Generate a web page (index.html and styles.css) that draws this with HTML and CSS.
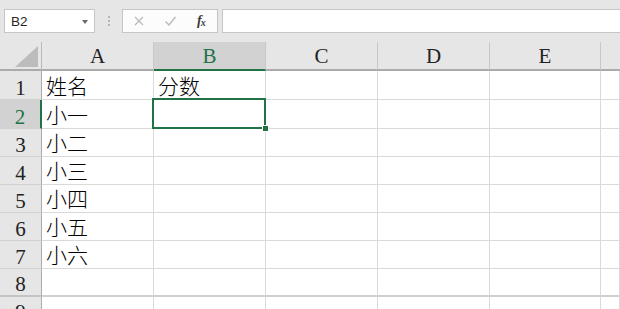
FILE: index.html
```html
<!DOCTYPE html>
<html lang="zh">
<head>
<meta charset="utf-8">
<title>Sheet</title>
<link rel="stylesheet" href="styles.css">
</head>
<body>
<div class="toolbar">
  <div class="namebox"><span class="nb-text">B2</span><span class="nb-arrow"></span></div>
  <div class="dots"><span></span><span></span><span></span></div>
  <div class="fbtns">
    <svg class="ico" width="12" height="12" viewBox="0 0 12 12"><path d="M2 2 L10 10 M10 2 L2 10" stroke="#b9b9b9" stroke-width="1.2" fill="none"/></svg>
    <svg class="ico" width="13" height="12" viewBox="0 0 13 12"><path d="M1.5 6.5 L5 10 L11.5 2" stroke="#b9b9b9" stroke-width="1.4" fill="none"/></svg>
    <span class="fx">f<span class="fx-x">x</span></span>
  </div>
  <div class="finput"></div>
</div>
<div class="sheet">
  <div class="corner"><svg width="24" height="22" viewBox="0 0 24 22"><polygon points="23,0 23,21 0,21" fill="#bcbcbc"/></svg></div>
  <div class="h">A</div>
  <div class="h sel">B</div>
  <div class="h">C</div>
  <div class="h">D</div>
  <div class="h">E</div>
  <div class="h last"></div>

  <div class="rh">1</div><div class="c">姓名</div><div class="c">分数</div><div class="c"></div><div class="c"></div><div class="c"></div><div class="c"></div>
  <div class="rh sel">2</div><div class="c">小一</div><div class="c active"><span class="handle"></span></div><div class="c"></div><div class="c"></div><div class="c"></div><div class="c"></div>
  <div class="rh">3</div><div class="c">小二</div><div class="c"></div><div class="c"></div><div class="c"></div><div class="c"></div><div class="c"></div>
  <div class="rh">4</div><div class="c">小三</div><div class="c"></div><div class="c"></div><div class="c"></div><div class="c"></div><div class="c"></div>
  <div class="rh">5</div><div class="c">小四</div><div class="c"></div><div class="c"></div><div class="c"></div><div class="c"></div><div class="c"></div>
  <div class="rh">6</div><div class="c">小五</div><div class="c"></div><div class="c"></div><div class="c"></div><div class="c"></div><div class="c"></div>
  <div class="rh">7</div><div class="c">小六</div><div class="c"></div><div class="c"></div><div class="c"></div><div class="c"></div><div class="c"></div>
  <div class="rh r8">8</div><div class="c r8"></div><div class="c r8"></div><div class="c r8"></div><div class="c r8"></div><div class="c r8"></div><div class="c r8"></div>
  <div class="rh r9">9</div><div class="c"></div><div class="c"></div><div class="c"></div><div class="c"></div><div class="c"></div><div class="c"></div>
</div>
</body>
</html>
```

FILE: styles.css
```css
html, body {
  margin: 0;
  padding: 0;
}
body {
  width: 620px;
  height: 309px;
  overflow: hidden;
  background: #e6e6e6;
  font-family: "Liberation Serif", "Noto Sans CJK SC", serif;
}
.toolbar {
  display: flex;
  align-items: center;
  height: 42px;
  padding: 9px 0 9px 4px;
  box-sizing: border-box;
}
.namebox {
  width: 91px;
  height: 24px;
  box-sizing: border-box;
  background: #fff;
  border: 1px solid #c6c6c6;
  display: flex;
  align-items: center;
  justify-content: space-between;
  padding: 0 6px 0 6px;
}
.nb-text {
  font-family: "Liberation Sans", "Noto Sans", sans-serif;
  font-size: 13.5px;
  color: #262626;
}
.nb-arrow {
  width: 0;
  height: 0;
  border-left: 3.5px solid transparent;
  border-right: 3.5px solid transparent;
  border-top: 4px solid #6a6a6a;
  margin-top: 1px;
}
.dots {
  width: 27px;
  height: 24px;
  display: flex;
  flex-direction: column;
  align-items: center;
  justify-content: center;
  gap: 2px;
}
.dots span {
  width: 2px;
  height: 2px;
  background: #b4b4b4;
}
.fbtns {
  width: 96px;
  height: 24px;
  box-sizing: border-box;
  background: #fcfcfc;
  border: 1px solid #c6c6c6;
  display: flex;
  align-items: center;
  padding-left: 10px;
  gap: 19px;
}
.fx {
  font-family: "Liberation Serif", serif;
  font-style: italic;
  font-weight: bold;
  font-size: 14px;
  color: #3c3c3c;
  margin-left: 1px;
  letter-spacing: -1px;
}
.fx-x {
  font-size: 10px;
  position: relative;
  top: 1px;
}
.finput {
  flex: 1;
  height: 24px;
  box-sizing: border-box;
  background: #fff;
  border: 1px solid #c6c6c6;
  border-right: none;
  margin-left: 4px;
}
.sheet {
  display: grid;
  grid-template-columns: 42px 112px 112px 112px 112px 111px 1fr;
  grid-template-rows: 29px 29px 29px 28px 28px 28px 28px 28px 28px 1fr;
  height: 267px;
  background: #fff;
}
.sheet > div {
  box-sizing: border-box;
}
.corner {
  background: #e6e6e6;
  border-right: 1px solid #bababa;
  border-bottom: 2px solid #ababab;
  display: flex;
  align-items: flex-end;
  justify-content: flex-end;
  padding: 0 2px 1px 0;
}
.corner svg {
  display: block;
}
.h {
  background: #e6e6e6;
  border-right: 1px solid #c8c8c8;
  border-bottom: 2px solid #ababab;
  display: flex;
  align-items: flex-end;
  justify-content: center;
  font-size: 21px;
  line-height: 1;
  color: #222;
  padding-bottom: 2px;
}
.h.sel {
  background: #d2d2d2;
  color: #217346;
  border-bottom-color: #217346;
}
.h.last {
  border-right: none;
}
.rh {
  background: #e6e6e6;
  border-right: 1px solid #ababab;
  border-bottom: 1px solid #d0d0d0;
  display: flex;
  align-items: flex-end;
  justify-content: center;
  font-size: 21px;
  line-height: 1;
  color: #222;
  padding-bottom: 0px;
}
.rh.sel {
  background: #d2d2d2;
  color: #217346;
  border-right: 2px solid #217346;
}
.rh.r9 {
  align-items: flex-start;
  padding-top: 5px;
}
.c {
  border-right: 1px solid #dadada;
  border-bottom: 1px solid #dadada;
  display: flex;
  align-items: flex-end;
  padding: 0 0 3px 4px;
  font-family: "Noto Sans CJK SC", sans-serif;
  font-weight: 300;
  font-size: 21px;
  line-height: 1;
  color: #000;
}
.r8 {
  border-bottom: 2px solid #d0d0d0;
}
.rh.r8 {
  border-bottom: 2px solid #c4c4c4;
}
.active {
  position: relative;
}
.active::after {
  content: "";
  position: absolute;
  left: -2px;
  top: -2px;
  right: -1px;
  bottom: -1px;
  border: 2px solid #217346;
}
.handle {
  position: absolute;
  right: -4px;
  bottom: -4px;
  width: 5px;
  height: 5px;
  background: #217346;
  border: 1px solid #fff;
  z-index: 2;
}
```
